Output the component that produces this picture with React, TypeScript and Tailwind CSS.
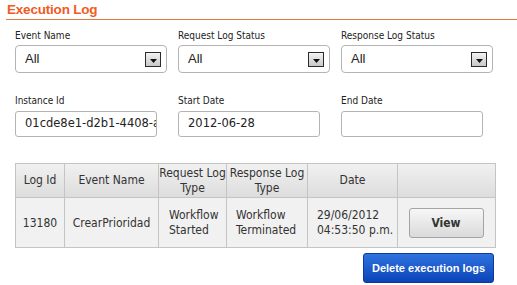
import React from "react";

function Arrow() {
  return (
    <div className="w-[16px] h-[15px] border border-[#2b2b2b] bg-gradient-to-b from-[#f2f2f2] to-[#c9c9c9] flex items-end justify-center pb-[3px]">
      <svg width="7" height="4" viewBox="0 0 7 4">
        <path d="M0 0 H7 L3.5 4 Z" fill="#111" />
      </svg>
    </div>
  );
}

function SelectField({ label }: { label: string }) {
  return (
    <div className="flex flex-col">
      <div className="h-[12px] leading-[12px] text-[10px] text-[#222]">{label}</div>
      <div className="mt-[3px] h-[28px] w-[152px] rounded-[4px] border border-[#b4b4b4] bg-white flex items-center justify-between pl-[9px] pr-[5px]">
        <span className="font-['Liberation_Sans',sans-serif] text-[13px] text-[#222]">All</span>
        <Arrow />
      </div>
    </div>
  );
}

function TextField({ label, value }: { label: string; value: string }) {
  return (
    <div className="flex flex-col">
      <div className="h-[12px] leading-[12px] text-[10px] text-[#222]">{label}</div>
      <div className="mt-[4px] h-[26px] w-[142px] rounded-[3px] border border-[#b4b4b4] bg-white flex items-center pl-[9px] overflow-hidden whitespace-nowrap">
        <span className="font-['DejaVu_Sans',sans-serif] text-[11.5px] text-[#222]">{value}</span>
      </div>
    </div>
  );
}

export default function App() {
  return (
    <div className="w-[517px] h-[285px] bg-white overflow-hidden font-['DejaVu_Sans_Condensed','DejaVu_Sans',sans-serif] text-[#222]">
      <div className="ml-[6px] h-[20px] border-b border-[#e07a40] pl-[1px] flex items-start pt-[2px]">
        <span className="font-['Liberation_Sans',sans-serif] font-bold text-[13.5px] leading-[16px] text-[#f15a22] tracking-[-0.2px]">
          Execution Log
        </span>
      </div>

      <div className="ml-[15px] mt-[10px] grid grid-cols-[152px_152px_152px] gap-x-[11px]">
        <SelectField label="Event Name" />
        <SelectField label="Request Log Status" />
        <SelectField label="Response Log Status" />
      </div>

      <div className="ml-[15px] mt-[22px] grid grid-cols-[152px_152px_152px] gap-x-[11px]">
        <TextField label="Instance Id" value="01cde8e1-d2b1-4408-a3c5-7f2e9b1d6a40" />
        <TextField label="Start Date" value="2012-06-28" />
        <TextField label="End Date" value="" />
      </div>

      <div className="ml-[15px] mt-[26px] w-[480px]">
        <table className="w-[480px] border-collapse table-fixed text-[12px] text-[#333]">
          <colgroup>
            <col className="w-[49px]" />
            <col className="w-[94px]" />
            <col className="w-[68px]" />
            <col className="w-[81px]" />
            <col className="w-[90px]" />
            <col className="w-[98px]" />
          </colgroup>
          <thead>
            <tr className="h-[34px] bg-gradient-to-b from-[#f1f1f1] to-[#dcdcdc]">
              <th className="border border-[#c4c4c4] font-normal text-center leading-[15px]">Log Id</th>
              <th className="border border-[#c4c4c4] font-normal text-center leading-[15px]">Event Name</th>
              <th className="border border-[#c4c4c4] font-normal text-center leading-[15px] whitespace-nowrap">
                Request Log
                <br />
                Type
              </th>
              <th className="border border-[#c4c4c4] font-normal text-center leading-[15px] whitespace-nowrap">
                Response Log
                <br />
                Type
              </th>
              <th className="border border-[#c4c4c4] font-normal text-center leading-[15px]">Date</th>
              <th className="border border-[#c4c4c4]"></th>
            </tr>
          </thead>
          <tbody>
            <tr className="h-[50px] bg-[#f1f1f1]">
              <td className="border border-[#c4c4c4] text-center">13180</td>
              <td className="border border-[#c4c4c4] text-center">CrearPrioridad</td>
              <td className="border border-[#c4c4c4] pl-[10px] leading-[15px]">
                Workflow
                <br />
                Started
              </td>
              <td className="border border-[#c4c4c4] pl-[9px] leading-[15px]">
                Workflow
                <br />
                Terminated
              </td>
              <td className="border border-[#c4c4c4] pl-[9px] leading-[15px] whitespace-nowrap">
                29/06/2012
                <br />
                04:53:50 p.m.
              </td>
              <td className="border border-[#c4c4c4]">
                <div className="flex justify-center pr-[1px]">
                  <button className="w-[75px] h-[30px] rounded-[3px] border border-[#a4a4a4] bg-gradient-to-b from-[#f7f7f7] to-[#dadada] text-[12px] font-bold text-[#333]">
                    View
                  </button>
                </div>
              </td>
            </tr>
          </tbody>
        </table>
        <div className="flex justify-end mt-[5px] pr-[1px]">
          <button className="w-[131px] h-[30px] rounded-[3px] border border-[#0a3a9a] bg-gradient-to-b from-[#2f72e0] to-[#0b44b8] text-white font-['Liberation_Sans',sans-serif] font-bold text-[11px]">
            Delete execution logs
          </button>
        </div>
      </div>
    </div>
  );
}
